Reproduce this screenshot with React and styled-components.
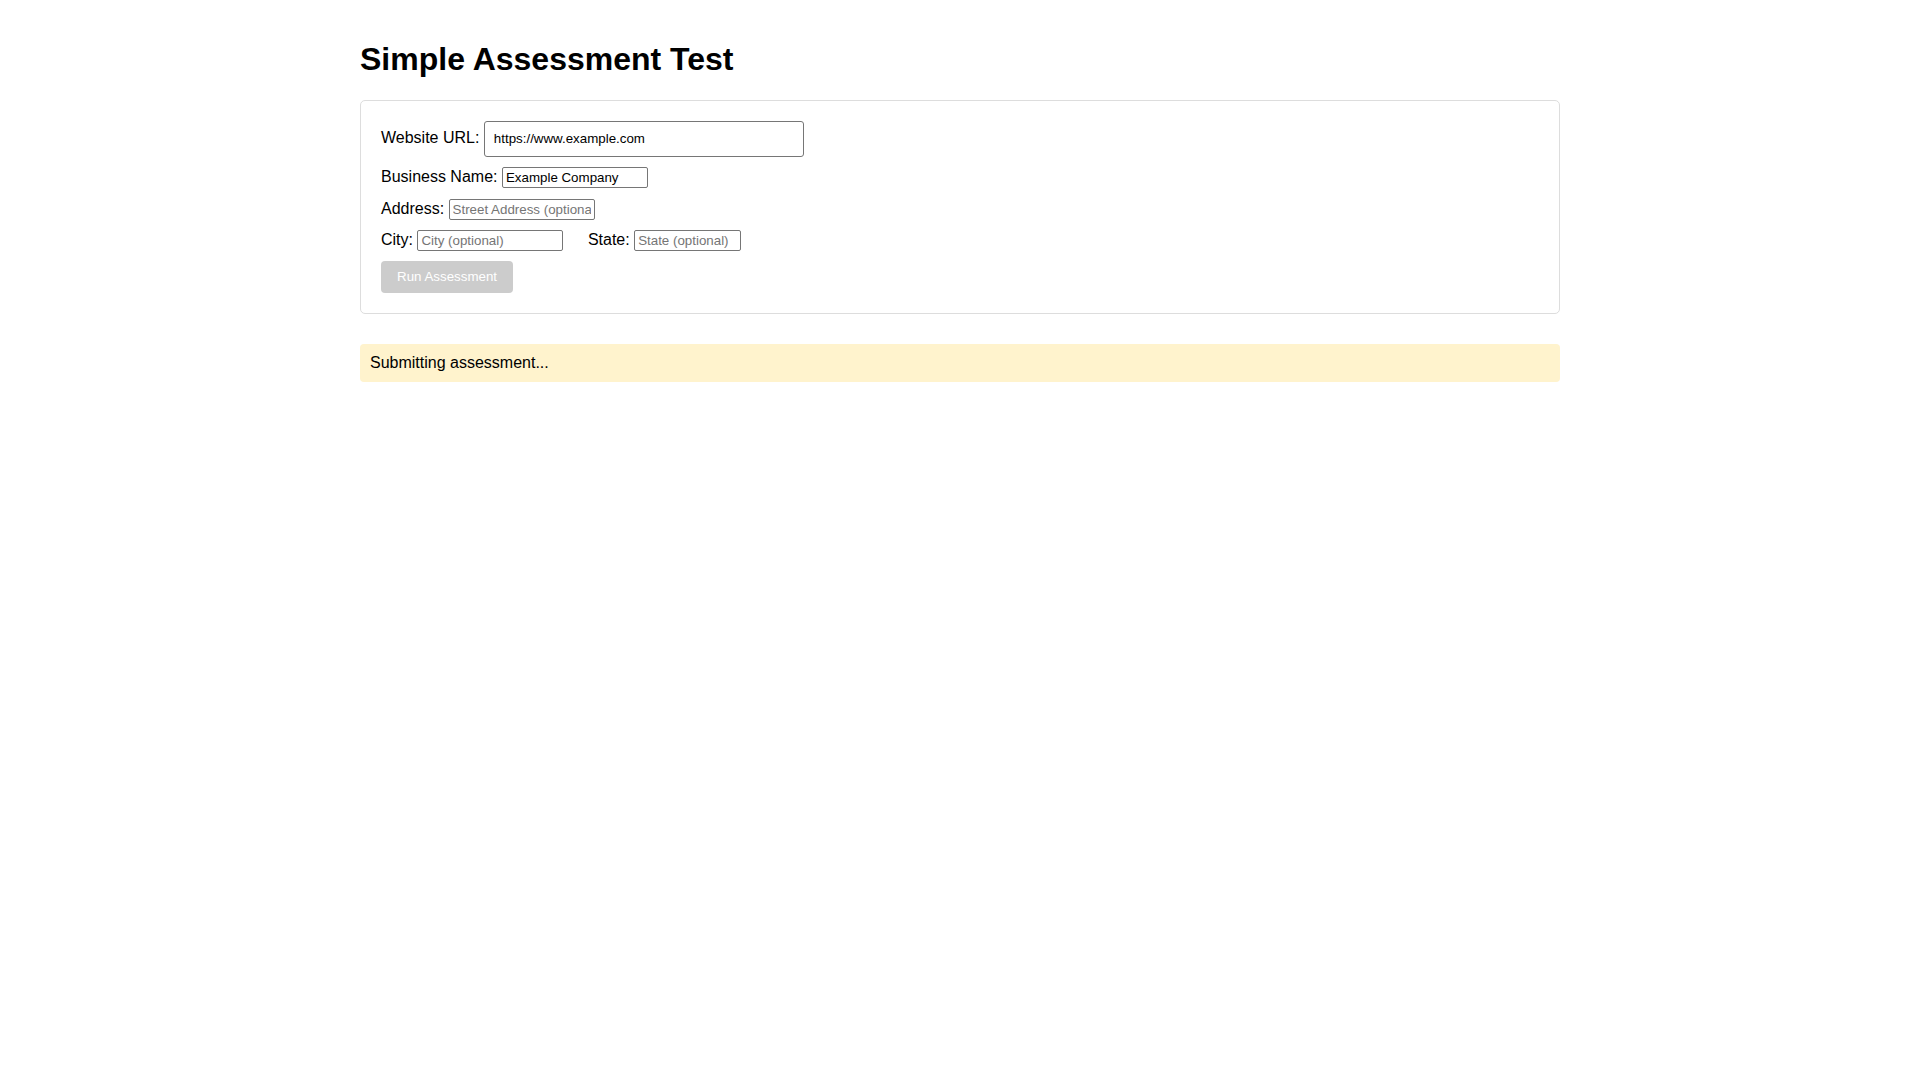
import React from "react";
import styled, { createGlobalStyle } from "styled-components";

const GlobalStyle = createGlobalStyle`
  html, body {
    background: #ffffff;
  }
  body {
    margin: 0;
    padding: 20px;
    font-family: "Liberation Sans", Arial, sans-serif;
    color: #000000;
  }
`;

const Container = styled.div`
  max-width: 1200px;
  margin: 0 auto;
`;

const Title = styled.h1`
  font-size: 32px;
  font-weight: bold;
  margin: 21.44px 0;
`;

const Card = styled.div`
  border: 1px solid #dddddd;
  border-radius: 5px;
  padding: 20px;
  margin-bottom: 30px;
`;

const FieldRow = styled.div`
  margin-bottom: 10.4px;
  font-size: 16px;
`;

const Label = styled.label`
  font-size: 16px;
  margin-left: ${(p) => (p.$gap ? "20px" : "0")};
`;

const TextInput = styled.input`
  font-family: "Liberation Sans", Arial, sans-serif;
  font-size: 13.333px;
  color: #000000;
  box-sizing: border-box;
  border: 1px solid #767676;
  background: #ffffff;
  outline: none;
  vertical-align: baseline;
  width: ${(p) => p.$w || "146px"};
  height: ${(p) => (p.$large ? "36px" : "21px")};
  padding: ${(p) => (p.$large ? "0 9px" : "1px 3px")};
  border-radius: ${(p) => (p.$large ? "3px" : "2px")};

  &::placeholder {
    color: #757575;
  }
`;

const RunButton = styled.button`
  font-family: "Liberation Sans", Arial, sans-serif;
  font-size: 13.333px;
  background: #cccccc;
  color: #ffffff;
  border: none;
  border-radius: 4px;
  padding: 8px 16px;
  line-height: 16px;
  cursor: not-allowed;
`;

const Status = styled.div`
  background: #fff3cd;
  border-radius: 4px;
  padding: 10px;
  font-size: 16px;
`;

export default function App() {
  return (
    <>
      <GlobalStyle />
      <Container>
        <Title>Simple Assessment Test</Title>
        <Card>
          <FieldRow>
            <Label>
              Website URL:{" "}
              <TextInput $large $w="320px" defaultValue="https://www.example.com" />
            </Label>
          </FieldRow>
          <FieldRow>
            <Label>
              Business Name: <TextInput defaultValue="Example Company" />
            </Label>
          </FieldRow>
          <FieldRow>
            <Label>
              Address: <TextInput placeholder="Street Address (optional)" />
            </Label>
          </FieldRow>
          <FieldRow>
            <Label>
              City: <TextInput placeholder="City (optional)" />
            </Label>{" "}
            <Label $gap>
              State: <TextInput $w="107px" placeholder="State (optional)" />
            </Label>
          </FieldRow>
          <RunButton disabled>Run Assessment</RunButton>
        </Card>
        <Status>Submitting assessment...</Status>
      </Container>
    </>
  );
}
